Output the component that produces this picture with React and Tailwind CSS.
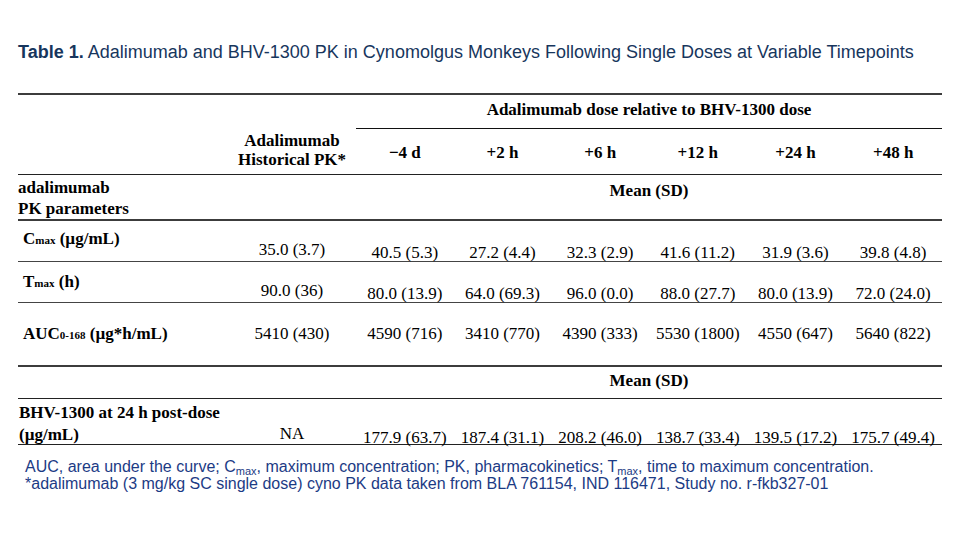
import React from 'react';

const cols = ['−4 d', '+2 h', '+6 h', '+12 h', '+24 h', '+48 h'];

const rows = [
  {
    key: 'cmax',
    label: (
      <>
        C<span className="text-[11px]">max</span> (µg/mL)
      </>
    ),
    hist: '35.0 (3.7)',
    values: ['40.5 (5.3)', '27.2 (4.4)', '32.3 (2.9)', '41.6 (11.2)', '31.9 (3.6)', '39.8 (4.8)'],
  },
  {
    key: 'tmax',
    label: (
      <>
        T<span className="text-[11px]">max</span> (h)
      </>
    ),
    hist: '90.0 (36)',
    values: ['80.0 (13.9)', '64.0 (69.3)', '96.0 (0.0)', '88.0 (27.7)', '80.0 (13.9)', '72.0 (24.0)'],
  },
];

const auc = ['4590 (716)', '3410 (770)', '4390 (333)', '5530 (1800)', '4550 (647)', '5640 (822)'];
const bhv = ['177.9 (63.7)', '187.4 (31.1)', '208.2 (46.0)', '138.7 (33.4)', '139.5 (17.2)', '175.7 (49.4)'];

const grid = 'grid grid-cols-[210px_128px_repeat(6,minmax(0,1fr))]';

export default function App() {
  return (
    <div className="w-[960px] h-[540px] bg-white overflow-hidden">
      {/* Title */}
      <h1 className="pt-[41px] pl-[18px] text-[18px] leading-[22px] text-[#17365d] font-['Liberation_Sans',Arial,sans-serif]">
        <span className="font-bold">Table 1.</span> Adalimumab and BHV-1300 PK in Cynomolgus Monkeys Following Single Doses at Variable Timepoints
      </h1>

      <div className="ml-[18px] mt-[30px] w-[924px] border-t-2 border-[#3c3c3c] text-black text-[17px] font-['Liberation_Serif','Times_New_Roman',serif]">
        {/* Header */}
        <div className={`${grid} grid-rows-[34px_45px] border-b border-[#222]`}>
          <div className="row-span-2" />
          <div className="row-span-2 flex flex-col justify-end items-center pb-[5px] font-bold text-center leading-[19px]">
            <span>Adalimumab</span>
            <span>Historical PK*</span>
          </div>
          <div className="col-span-6 flex items-center justify-center border-b border-[#111] pb-[3px] font-bold">
            Adalimumab dose relative to BHV-1300 dose
          </div>
          {cols.map((c) => (
            <div key={c} className="flex items-center justify-center pt-[3px] font-bold">
              {c}
            </div>
          ))}
        </div>

        {/* Section heading */}
        <div className={`${grid} h-[46px] border-b-2 border-[#3c3c3c]`}>
          <div className="pt-[2px] font-bold leading-[21px]">
            adalimumab
            <br />
            PK parameters
          </div>
          <div />
          <div className="col-span-6 pt-[5px] text-center font-bold leading-[21px]">Mean (SD)</div>
        </div>

        {/* Cmax / Tmax */}
        {rows.map((r, i) => (
          <div key={r.key} className={`${grid} h-[41px] border-b border-[#444] leading-[17px]`}>
            <div className={`pl-[5px] font-bold leading-[21px] ${i === 0 ? 'pt-[7px]' : 'pt-[9px]'}`}>{r.label}</div>
            <div className="flex items-end justify-center pb-[3px]">{r.hist}</div>
            {r.values.map((v, j) => (
              <div key={j} className="flex items-end justify-center">
                {v}
              </div>
            ))}
          </div>
        ))}

        {/* AUC */}
        <div className={`${grid} h-[64px] items-center border-b-2 border-[#3c3c3c]`}>
          <div className="pl-[5px] font-bold">
            AUC<span className="text-[11px]">0-168</span> (µg*h/mL)
          </div>
          <div className="text-center">5410 (430)</div>
          {auc.map((v, j) => (
            <div key={j} className="text-center">
              {v}
            </div>
          ))}
        </div>

        {/* BHV heading */}
        <div className={`${grid} h-[32px] border-b border-[#222]`}>
          <div />
          <div />
          <div className="col-span-6 flex items-center justify-center pb-[4px] font-bold">Mean (SD)</div>
        </div>

        {/* BHV row */}
        <div className={`${grid} h-[46px] border-b border-[#222] leading-[17px]`}>
          <div className="pl-[1px] pt-[3px] font-bold leading-[22px]">
            BHV-1300 at 24 h post-dose
            <br />
            (µg/mL)
          </div>
          <div className="flex items-end justify-center pb-[4px]">NA</div>
          {bhv.map((v, j) => (
            <div key={j} className="flex items-end justify-center whitespace-nowrap">
              {v}
            </div>
          ))}
        </div>
      </div>

      {/* Footnote */}
      <div className="mt-[13px] pl-[25px] text-[16px] leading-[17px] text-[#1c3b85] font-['Liberation_Sans',Arial,sans-serif]">
        <p>
          AUC, area under the curve; C<sub className="text-[11px]">max</sub>, maximum concentration; PK, pharmacokinetics; T
          <sub className="text-[11px]">max</sub>, time to maximum concentration.
        </p>
        <p>*adalimumab (3 mg/kg SC single dose) cyno PK data taken from BLA 761154, IND 116471, Study no. r-fkb327-01</p>
      </div>
    </div>
  );
}
